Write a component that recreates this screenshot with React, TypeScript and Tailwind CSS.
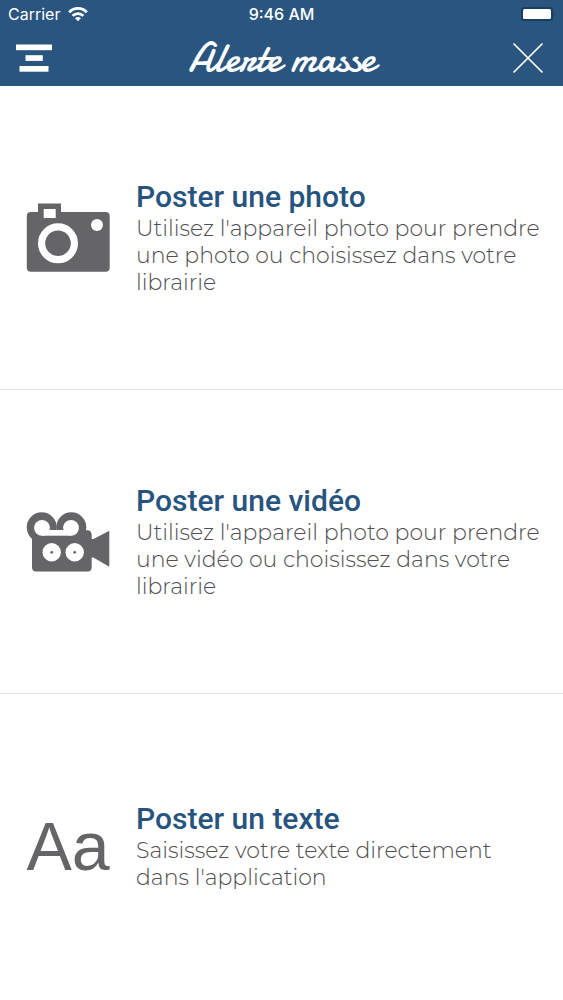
import type { ReactNode } from 'react';

type PostOption = {
  title: string;
  text: string;
  icon: ReactNode;
};

function WifiIcon() {
  return (
    <svg className="w-5 h-4" viewBox="0 0 20 16" fill="none" stroke="currentColor" strokeWidth="2.8" aria-hidden="true">
      <path d="M1.2 6.2C6.2 1.2 13.8 1.2 18.8 6.2" />
      <path d="M4.6 9.7C7.7 6.8 12.3 6.8 15.4 9.7" />
      <path d="M10 15.2L7 12.2C8.7 10.6 11.3 10.6 13 12.2Z" fill="currentColor" stroke="none" />
    </svg>
  );
}

function BatteryIcon() {
  return (
    <svg className="w-9 h-4" viewBox="0 0 36 16" aria-hidden="true">
      <rect x="2" y="1" width="32" height="14" rx="3.5" fill="#1a3f60" />
      <rect x="4" y="3" width="28" height="10" rx="1.5" fill="#fff" />
      <path d="M34.5 6C36 6.5 36 9.5 34.5 10Z" fill="#1a3f60" />
    </svg>
  );
}

function MenuIcon() {
  return (
    <svg className="w-9 h-7" viewBox="0 0 36 28" fill="currentColor" aria-hidden="true">
      <rect x="0" y="0.5" width="36" height="5.7" />
      <rect x="9.5" y="11.2" width="17.3" height="5.7" />
      <rect x="3.5" y="22" width="29" height="5.7" />
    </svg>
  );
}

function CloseIcon() {
  return (
    <svg className="w-8 h-8" viewBox="0 0 32 32" stroke="currentColor" strokeWidth="1.7" aria-hidden="true">
      <path d="M1.5 1.5L30.5 30.5M30.5 1.5L1.5 30.5" />
    </svg>
  );
}

function CameraIcon() {
  return (
    <svg className="w-[84px]" viewBox="0 0 84 69" aria-hidden="true">
      <path
        fill="#656467"
        d="M12 0.5H35V9H79.5Q83.7 9 83.7 13.2V64.5Q83.7 68.7 79.5 68.7H5Q0.8 68.7 0.8 64.5V13.2Q0.8 9 5 9H12Z"
      />
      <rect x="17.7" y="6" width="12" height="9" fill="#fff" />
      <circle cx="32" cy="40.3" r="16.4" fill="#656467" stroke="#fff" strokeWidth="7.2" />
      <circle cx="71" cy="22" r="6" fill="#fff" />
    </svg>
  );
}

function VideoIcon() {
  return (
    <svg className="w-[84px]" viewBox="0 0 84 62" aria-hidden="true">
      <g fill="#656467">
        <circle cx="15.7" cy="16.3" r="15" />
        <circle cx="45.3" cy="16.3" r="15" />
        <path d="M6 24H15V19.3H62Q65.7 20 65.7 24V28L67.5 28L83.3 19.7V55.7L67.5 46.5H65.7V56.3Q65.7 60.5 61.5 60.5H10.2Q6 60.5 6 56.3Z" />
      </g>
      <g fill="#fff">
        <circle cx="16" cy="16.8" r="7.9" />
        <circle cx="45" cy="16.8" r="7.9" />
        <rect x="16" y="19" width="29" height="5.7" />
        <circle cx="25.7" cy="41.3" r="9.2" />
        <circle cx="48.7" cy="41.3" r="9.2" />
      </g>
      <circle cx="25.7" cy="41.3" r="1.4" fill="#656467" />
      <circle cx="48.7" cy="41.3" r="1.4" fill="#656467" />
    </svg>
  );
}

const options: PostOption[] = [
  {
    title: 'Poster une photo',
    text: "Utilisez l'appareil photo pour prendre une photo ou choisissez dans votre librairie",
    icon: <CameraIcon />,
  },
  {
    title: 'Poster une vidéo',
    text: "Utilisez l'appareil photo pour prendre une vidéo ou choisissez dans votre librairie",
    icon: <VideoIcon />,
  },
  {
    title: 'Poster un texte',
    text: "Saisissez votre texte directement dans l'application",
    icon: <span className="font-['Liberation_Sans',sans-serif] text-[68px] leading-none text-[#656467]">Aa</span>,
  },
];

export default function App() {
  return (
    <div className="flex flex-col min-h-screen bg-white font-['Montserrat','Inter',sans-serif]">
      <header className="bg-[#29557f] text-white">
        <div className="grid grid-cols-3 items-center h-7 px-2 font-['Inter',sans-serif] text-base">
          <div className="flex items-center gap-2">
            <span>Carrier</span>
            <WifiIcon />
          </div>
          <span className="text-center font-medium">9:46 AM</span>
          <div className="flex justify-end">
            <BatteryIcon />
          </div>
        </div>
        <div className="flex items-center justify-between h-[58px] pt-0.5 pl-4 pr-[19px]">
          <button type="button" aria-label="Menu">
            <MenuIcon />
          </button>
          <h1 className="font-['Damion','Lato',cursive] text-[41px] leading-10">Alerte masse</h1>
          <button type="button" aria-label="Fermer">
            <CloseIcon />
          </button>
        </div>
      </header>
      <main className="grid flex-1 auto-rows-fr divide-y divide-[#e2e2e4] pb-0.5">
        {options.map((option) => (
          <button key={option.title} type="button" className="flex items-center gap-5 pl-5 pr-4 text-left">
            <span className="flex justify-center shrink-0 w-24">{option.icon}</span>
            <span className="block">
              <span className="block font-['Roboto',sans-serif] font-medium text-[30px] leading-9 text-[#27547f]">
                {option.title}
              </span>
              <span className="block font-light text-[22px] leading-[27px] text-[#4f4e51]">{option.text}</span>
            </span>
          </button>
        ))}
      </main>
    </div>
  );
}
